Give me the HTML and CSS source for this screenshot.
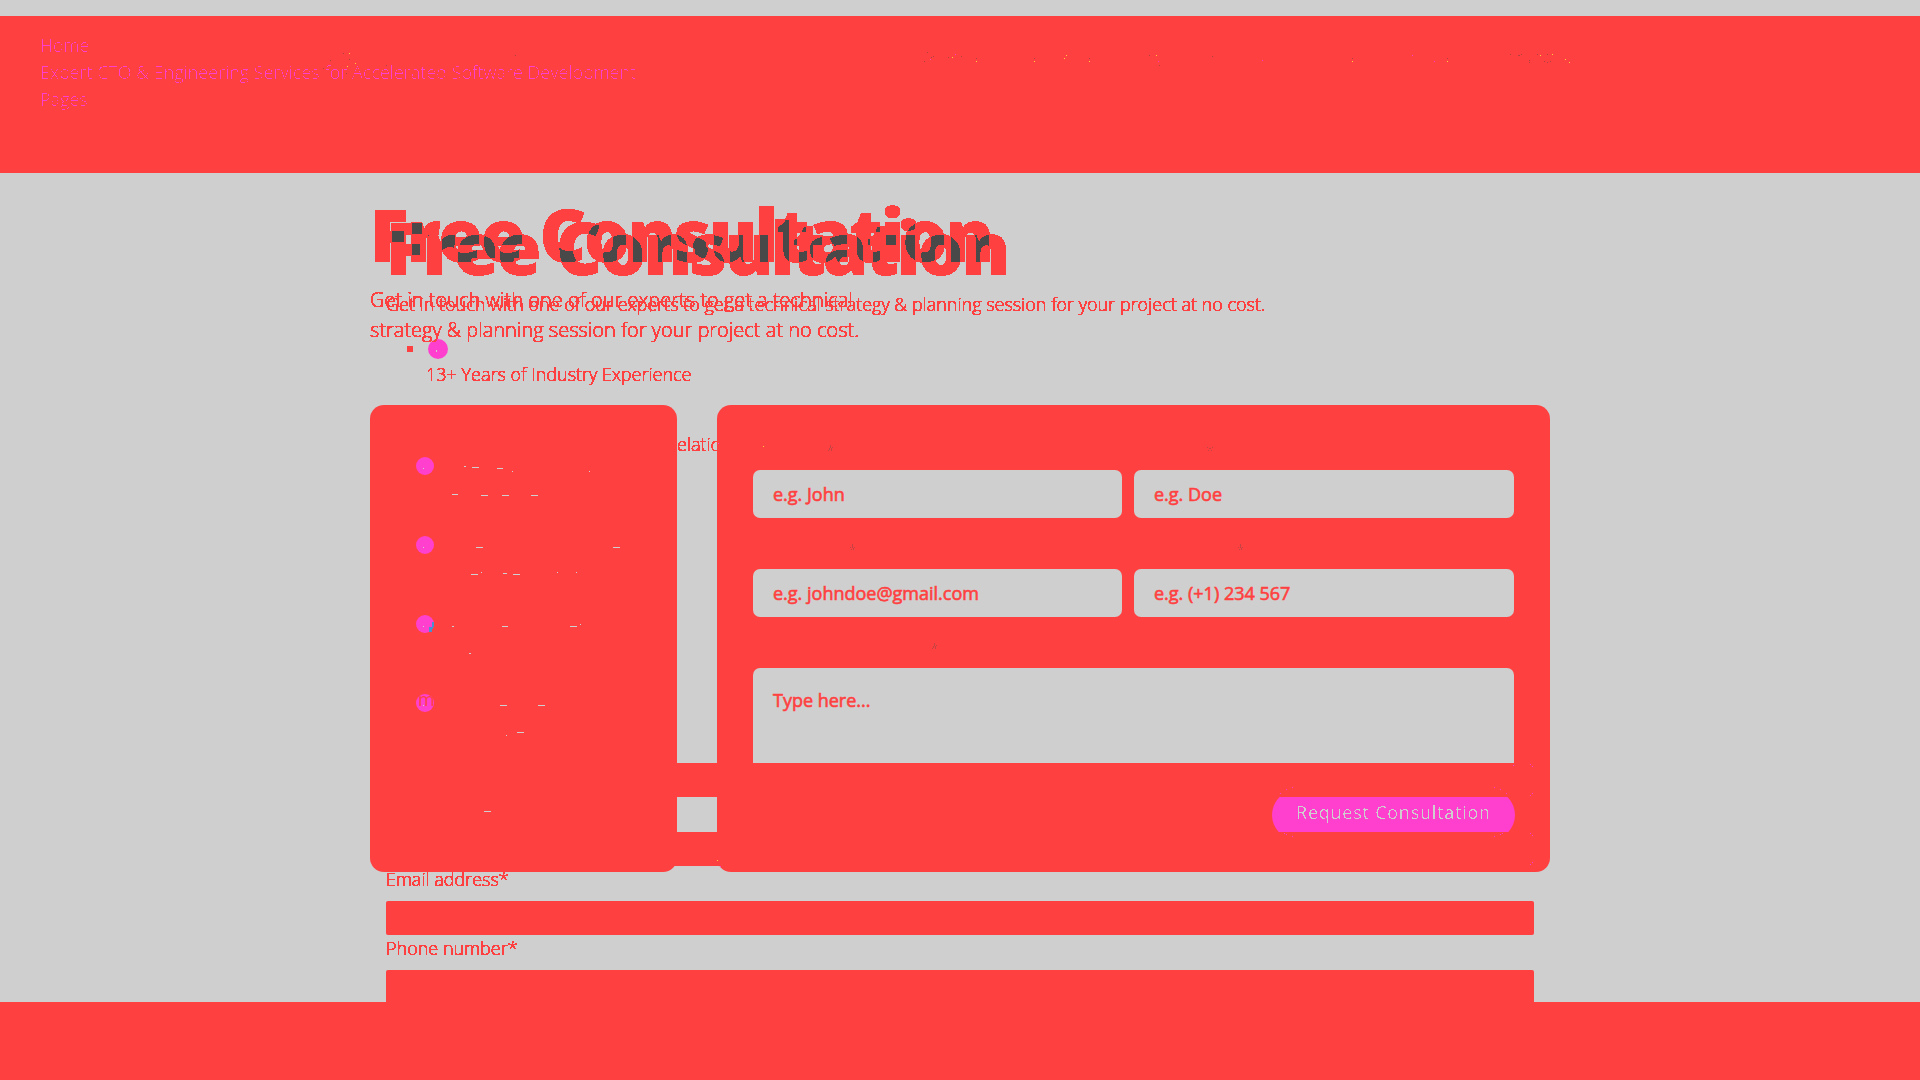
FILE: index.html
```html
<!DOCTYPE html>
<html lang="en">
<head>
<meta charset="utf-8">
<title>Free Consultation</title>
<link rel="stylesheet" href="styles.css">
</head>
<body>
<svg class="defs" width="0" height="0" aria-hidden="true">
  <filter id="solid" color-interpolation-filters="sRGB"><feComponentTransfer><feFuncA type="discrete" tableValues="0 1 1 1 1 1 1 1 1 1 1 1 1 1 1 1"/></feComponentTransfer></filter>
  <filter id="core" color-interpolation-filters="sRGB"><feComponentTransfer><feFuncA type="discrete" tableValues="0 0 1"/></feComponentTransfer></filter>
  <filter id="overlap" color-interpolation-filters="sRGB"><feComponentTransfer><feFuncR type="discrete" tableValues="0.29 1 1 1 1"/><feFuncG type="discrete" tableValues="0.29 0.251 0.251 0.251 0.251"/><feFuncB type="discrete" tableValues="0.29 0.251 0.251 0.251 0.251"/><feFuncA type="discrete" tableValues="0 1 1 1 1 1 1 1 1 1"/></feComponentTransfer></filter>
</svg>
<header class="top">
  <nav class="nav"><span>Home</span><span>Expert CTO &amp; Engineering Services for Accelerated Software Development</span><span>Pages</span></nav>
</header>
<main class="stage">
  <section class="layer base">
    <p class="lead-small">Get in touch with one of our experts to get a technical strategy &amp; planning session for your project at no cost.</p>
    <div class="point"><i class="square"></i><i class="dot large"></i></div>
    <p class="years">13+ Years of Industry Experience</p>
    <p class="relation">elatio</p>
    <div class="fields">
      <div class="bar"></div>
      <div class="bar"></div>
      <label>Email address*</label>
      <div class="bar"></div>
      <label>Phone number*</label>
      <div class="bar"></div>
    </div>
  </section>
  <section class="layer top-layer">
    <p class="lead">Get in touch with one of our experts to get a technical<br>strategy &amp; planning session for your project at no cost.</p>
    <div class="cards">
      <aside class="card benefits">
        <i class="dot"></i><i class="dot"></i><i class="dot"></i><i class="dot marked"><span>m</span></i>
      </aside>
      <form class="card form">
        <div class="row"><div class="input">e.g. John</div><div class="input">e.g. Doe</div></div>
        <div class="row"><div class="input">e.g. johndoe@gmail.com</div><div class="input">e.g. (+1) 234 567</div></div>
        <div class="area">Type here...</div>
        <div class="action"><div class="button"><span>Request Consultation</span></div></div>
      </form>
    </div>
  </section>
  <div class="titles"><h1>Free Consultation</h1><h1 class="second">Free Consultation</h1></div>
</main>
<footer class="bottom"></footer>
<svg class="specks" viewBox="0 0 1920 1080" shape-rendering="crispEdges" aria-hidden="true">
  <path fill="#cfcfcf" d="M464 466h2v1h-2zM472 467h7v1h-7zM497 468h6v1h-6zM512 471h1v1h-1zM589 471h1v1h-1zM452 494h6v1h-6zM481 495h7v1h-7zM502 495h7v1h-7zM531 495h7v1h-7zM476 547h7v1h-7zM613 547h7v1h-7zM471 574h7v1h-7zM481 572h1v1h-1zM503 573h4v1h-4zM513 574h7v1h-7zM557 572h1v1h-1zM576 572h1v1h-1zM452 626h2v1h-2zM502 626h6v1h-6zM570 626h7v1h-7zM580 624h1v1h-1zM469 653h2v1h-2zM500 705h7v1h-7zM538 705h7v1h-7zM506 735h1v1h-1zM517 732h7v1h-7zM484 811h7v1h-7zM436 350h1v2h-1zM423 468h1v1h-1zM423 547h1v1h-1zM423 626h1v1h-1zM423 705h1v1h-1z"/>
  <path fill="#ffcf40" d="M349 53h1v1h-1zM355 63h1v1h-1zM347 66h1v1h-1zM952 57h1v1h-1zM976 61h1v1h-1zM1034 61h1v1h-1zM1064 58h1v1h-1zM1066 55h1v1h-1zM1089 61h1v1h-1zM1156 55h1v1h-1zM1352 61h1v1h-1zM1447 61h1v1h-1zM1540 55h1v1h-1zM1552 54h1v1h-1zM1565 59h1v1h-1zM1569 62h1v1h-1zM763 446h1v1h-1zM717 860h1v1h-1z"/>
  <path fill="#b34040" d="M343 53h1v1h-1zM330 60h1v1h-1zM349 59h1v1h-1zM323 68h1v1h-1zM346 73h1v1h-1zM386 65h1v1h-1zM515 55h1v1h-1zM927 52h1v1h-1zM933 56h1v1h-1zM931 57h1v1h-1zM924 61h1v1h-1zM948 57h1v1h-1zM961 56h1v1h-1zM976 58h1v1h-1zM1034 58h1v1h-1zM1089 58h1v1h-1zM1149 55h1v1h-1zM1159 65h1v1h-1zM1212 56h1v1h-1zM1352 58h1v1h-1zM1447 58h1v1h-1zM1510 54h1v1h-1zM1518 55h2v1h-2zM1521 54h1v1h-1zM1537 54h1v1h-1zM1547 54h1v1h-1zM1529 60h1v1h-1zM1529 62h1v1h-1zM1544 61h1v1h-1zM1547 62h1v1h-1zM1550 61h1v1h-1z"/>
  <path fill="#c44343" d="M830 445h1v3h-1zM829 448h1v2h-1zM828 450h1v1h-1zM831 448h1v3h-1zM832 447h1v1h-1zM852 544h1v4h-1zM850 547h1v1h-1zM854 547h1v1h-1zM851 549h1v1h-1zM853 548h1v2h-1zM934 643h1v3h-1zM933 646h1v2h-1zM932 648h1v1h-1zM935 646h1v3h-1zM936 645h1v1h-1zM1207 447h1v1h-1zM1209 448h2v1h-2zM1212 447h1v1h-1zM1208 450h1v1h-1zM1211 450h1v1h-1zM1240 544h1v4h-1zM1238 547h1v1h-1zM1242 547h1v1h-1zM1239 549h1v1h-1zM1241 548h1v2h-1z"/>
  <path fill="#ff40cf" d="M930 59h1v1h-1zM955 54h1v1h-1zM1158 61h1v1h-1zM1262 60h1v1h-1zM1412 55h1v1h-1zM1434 61h1v1h-1zM718 443h1v1h-1zM720 866h1v1h-1zM1280 793h1v1h-1zM1286 789h1v1h-1zM1292 787h1v1h-1zM1494 787h1v1h-1zM1500 789h1v1h-1zM1506 793h1v1h-1zM1284 833h1v1h-1zM1286 834h1v1h-1zM1292 836h1v1h-1zM1494 836h1v1h-1zM1500 834h1v1h-1zM1502 833h1v1h-1zM1513 765h1v1h-1zM1530 764h1v1h-1zM1532 766h1v1h-1zM1532 793h1v1h-1zM1530 795h1v1h-1zM1530 833h1v1h-1zM1532 835h1v1h-1zM1532 862h1v1h-1zM1530 864h1v1h-1z"/>
  <path fill="#4a90cf" d="M432 622h2v5h-2zM429 627h4v2h-4zM429 629h3v3h-3z"/>
</svg>
</body>
</html>
```
FILE: styles.css
```css
* { box-sizing: border-box; }
body {
  position: relative;
  display: flex;
  flex-direction: column;
  height: 1080px;
  margin: 0;
  padding-top: 16px;
  overflow: hidden;
  background: #cfcfcf;
  color: #ff4040;
  font: 300 18px/27px "Open Sans", "Noto Sans", sans-serif;
}
p, h1 { margin: 0; }
.defs, .specks { position: absolute; top: 0; left: 0; }
.specks { width: 1920px; height: 1080px; }
.top { height: 157px; padding: 16px 40px; background: #ff4040; }
.nav { display: flex; flex-direction: column; color: #ff40cf; filter: url(#core); }
.stage { position: relative; height: 829px; overflow: hidden; }
.bottom { height: 78px; background: #ff4040; }
.layer { position: absolute; inset: 0; display: flex; flex-direction: column; }
.base { padding: 118px 386px 0; }
.top-layer { padding: 112px 370px 0; }

.titles {
  position: absolute;
  top: 0;
  left: 370px;
  display: grid;
  padding-top: 12px;
  isolation: isolate;
  color: #fff;
  filter: url(#overlap);
}
h1 { grid-area: 1 / 1; font-size: 72px; line-height: 98px; font-weight: 800; letter-spacing: -2.16px; white-space: nowrap; }
.second { margin: 13px 0 0 16px; mix-blend-mode: difference; }

.lead-small, .lead, .years, .relation, label { filter: url(#solid); }
.point { display: flex; align-items: center; gap: 15px; height: 20px; margin: 21px 0 0 21px; }
.square { width: 6px; height: 6px; background: #ff4040; }
.dot { display: block; width: 18px; height: 18px; border-radius: 50%; background: #ff40cf; }
.large { width: 20px; height: 20px; }
.years { margin: 2px 0 0 40px; }
.relation { margin: 43px 0 0 291px; }
.fields { display: flex; flex-direction: column; margin-top: 305px; }
.bar { flex: none; height: 34px; border-radius: 2px; background: #ff4040; }
.bar + .bar { margin-top: 35px; }
label { height: 35px; line-height: 27px; }

.lead { font-size: 20px; line-height: 30px; }
.cards { display: flex; gap: 40px; height: 467px; margin-top: 60px; }
.card { border-radius: 14px; background: #ff4040; }
.benefits { display: flex; flex-direction: column; gap: 61px; width: 307px; padding: 52px 46px; }
.marked { overflow: hidden; color: #ff4040; font-style: normal; font-weight: 400; line-height: 10px; }
.marked span { display: block; margin-left: 2px; }
.form { flex: 1; padding: 65px 36px 0; }
.row { display: grid; grid-template-columns: 369px 380px; gap: 12px; margin-bottom: 51px; }
.input, .area { height: 48px; padding: 11px 20px; border-radius: 7px; background: #cfcfcf; font-weight: 400; -webkit-text-stroke: 0.6px #ff4040; }
.area { height: 95px; padding-top: 19px; border-radius: 7px 7px 0 0; }
.action { display: flex; align-items: center; justify-content: flex-end; height: 35px; margin: 34px -1px 0 0; overflow: hidden; }
.button { flex: none; width: 243px; height: 50px; border-radius: 25px; background: #ff40cf; color: #cfcfcf; text-align: center; font-weight: 400; line-height: 45px; letter-spacing: 0.76px; }
.button span { display: block; filter: url(#core); }
```
